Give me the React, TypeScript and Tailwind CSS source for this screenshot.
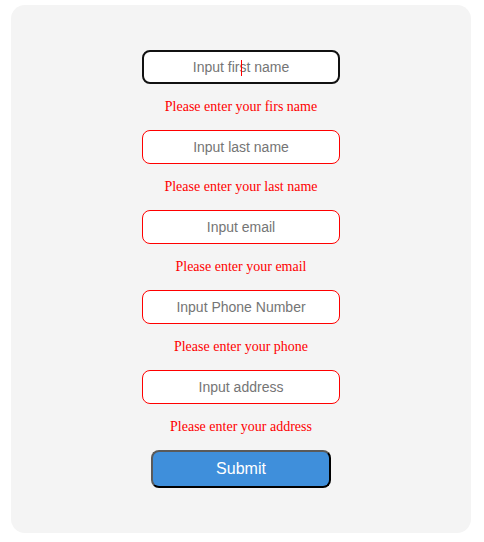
import React from "react";

const fields = [
  { ph: "Input first name", err: "Please enter your firs name", focus: true },
  { ph: "Input last name", err: "Please enter your last name" },
  { ph: "Input email", err: "Please enter your email" },
  { ph: "Input Phone Number", err: "Please enter your phone" },
  { ph: "Input address", err: "Please enter your address" },
];

export default function App() {
  return (
    <div className="w-[484px] h-[542px] bg-white pt-[5px] pl-[11px]">
      <div className="w-[460px] h-[528px] bg-[#f4f4f4] rounded-[14px] flex flex-col items-center pt-[45px]">
        {fields.map((f, i) => (
          <div key={i} className="flex flex-col items-center">
            <div className="relative">
              <input
                placeholder={f.ph}
                className={
                  f.focus
                    ? "w-[198px] h-[34px] bg-white rounded-[8px] border-2 border-[#111] text-center text-[14px] outline-none placeholder:text-[#757575] [font-family:Arial,'Liberation_Sans',sans-serif]"
                    : "w-[198px] h-[34px] bg-white rounded-[8px] border border-[#ff0000] text-center text-[14px] outline-none placeholder:text-[#757575] [font-family:Arial,'Liberation_Sans',sans-serif]"
                }
              />
              {f.focus && (
                <span className="absolute left-[99px] top-[10px] w-[1px] h-[16px] bg-[#ff0000]" />
              )}
            </div>
            <div className="h-[46px] flex items-center justify-center text-[14px] leading-[18px] text-[#ff0000] [font-family:'Times_New_Roman','Liberation_Serif',serif]">
              {f.err}
            </div>
          </div>
        ))}
        <button className="w-[180px] h-[38px] bg-[#3f8fdb] rounded-[8px] border-2 border-t-[#5a5a5a] border-l-[#5a5a5a] border-b-black border-r-black text-white text-[16px] [font-family:Arial,'Liberation_Sans',sans-serif]">
          Submit
        </button>
      </div>
    </div>
  );
}
